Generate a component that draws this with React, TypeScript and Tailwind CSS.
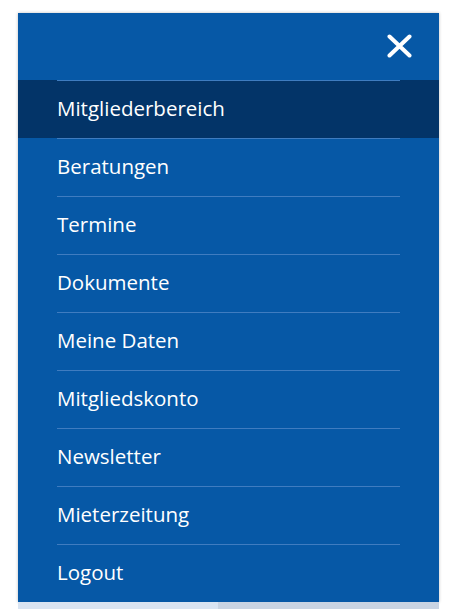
const items = [
  "Mitgliederbereich",
  "Beratungen",
  "Termine",
  "Dokumente",
  "Meine Daten",
  "Mitgliedskonto",
  "Newsletter",
  "Mieterzeitung",
  "Logout",
];

function CloseIcon() {
  return (
    <svg width="25" height="24" viewBox="0 0 25 24" fill="none" aria-hidden="true">
      <path
        d="M2.5 2.5L22.5 21.5M22.5 2.5L2.5 21.5"
        stroke="white"
        strokeWidth="4"
        strokeLinecap="round"
      />
    </svg>
  );
}

export default function App() {
  return (
    <div className="h-[609px] w-[449px] overflow-hidden bg-white font-['Open_Sans',sans-serif]">
      <div className="pt-[13px] px-[18px] pr-[10px]">
        <nav className="bg-[#0658a6] shadow-[0_0_3px_rgba(0,0,0,0.25)]">
          {/* header with close button */}
          <div className="flex h-[67px] items-center justify-end pr-[27px]">
            <button className="pb-[1px]">
              <CloseIcon />
            </button>
          </div>

          <ul>
            {items.map((item, i) => (
              <li
                key={item}
                className={i === 0 ? "bg-[#033468]" : ""}
              >
                <div className="mx-[39px] border-t border-[#3f7cc0]">
                  <a
                    href="#"
                    className="flex h-[57px] items-center pb-[2px] text-[20.5px] text-white"
                  >
                    {item}
                  </a>
                </div>
              </li>
            ))}
          </ul>
        </nav>

        <div className="flex h-[8px]">
          <div className="w-[200px] bg-[#d9e4f2]" />
          <div className="flex-1 bg-[#c9d4e3]" />
        </div>
      </div>
    </div>
  );
}
